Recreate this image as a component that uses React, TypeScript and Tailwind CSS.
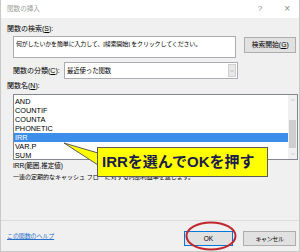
import { ChevronDown, ChevronUp } from 'lucide-react'

const font = { fontFamily: "'Liberation Sans', 'Noto Sans CJK JP', sans-serif" }

const items = ['AND', 'COUNTIF', 'COUNTA', 'PHONETIC', 'IRR', 'VAR.P', 'SUM']

export default function App() {
  return (
    <div
      className="relative w-[300px] h-[252px] overflow-hidden bg-[#f0f0f0] text-black border-x border-b border-[#c9c9c9] flex flex-col"
      style={font}
    >
      {/* title bar */}
      <div className="h-[18px] bg-white flex items-center pl-[6px] pr-[9px] shrink-0">
        <span className="text-[6.6px] leading-[8px] text-[#a0a0a0]">関数の挿入</span>
        <span className="ml-auto text-[8px] leading-[8px] text-[#888]">?</span>
        <span className="ml-[22px] text-[10px] leading-[8px] text-[#888]">×</span>
      </div>

      <div className="flex flex-col pl-[6px] pr-[3px] flex-1">
        <p className="mt-[7px] h-[8px] text-[7px] leading-[8px]">関数の検索(<span className="underline">S</span>):</p>

        <div className="mt-[3px] flex pl-[6px] gap-[8px]">
          <div className="w-[225px] h-[22px] bg-white border border-[#abadb3] pl-[2px] pt-[3px] text-[6px] leading-[8px] tracking-[-0.15px] whitespace-nowrap overflow-hidden">
            何がしたいかを簡単に入力して、[検索開始] をクリックしてください。
          </div>
          <button className="mt-[1px] w-[52px] h-[16px] bg-[#e1e1e1] border border-[#adadad] text-[6.8px] leading-[8px]">
            検索開始(<span className="underline">G</span>)
          </button>
        </div>

        <div className="mt-[4px] flex items-center pl-[6px] h-[17px]">
          <span className="w-[51px] text-[7px] leading-[8px] whitespace-nowrap">
            関数の分類(<span className="underline">C</span>):
          </span>
          <div className="w-[174px] h-[17px] bg-white border border-[#abadb3] flex items-center">
            <span className="pl-[2px] text-[6.4px] leading-[8px] tracking-[-0.1px]">最近使った関数</span>
            <div className="ml-auto mr-[1px] w-[8px] h-[13px] bg-[#e8e8e8] border border-[#cfcfcf] flex items-center justify-center">
              <ChevronDown size={6} strokeWidth={1.5} color="#777" />
            </div>
          </div>
        </div>

        <p className="mt-[3px] h-[8px] text-[7px] leading-[8px]">関数名(<span className="underline">N</span>):</p>

        <div className="mt-[4px] ml-[6px] w-[285px] h-[66px] bg-white border border-[#828790] flex">
          <div className="flex-1 pt-[2px] overflow-hidden">
            {items.map((it) => (
              <div
                key={it}
                className={`h-[9px] pl-[1px] text-[7.3px] leading-[9px] ${it === 'IRR' ? 'bg-[#3b8eea] text-white' : ''}`}
              >
                {it}
              </div>
            ))}
          </div>
          <div className="w-[9px] bg-[#f0f0f0] flex flex-col items-center">
            <ChevronUp size={6} strokeWidth={1.5} color="#888" className="mt-[2px]" />
            <div className="mt-[17px] w-[7px] h-[28px] bg-[#cdcdcd]" />
            <ChevronDown size={6} strokeWidth={1.5} color="#888" className="mt-auto mb-[2px]" />
          </div>
        </div>

        <p className="mt-[2px] ml-[6px] h-[8px] text-[6.5px] leading-[8px]">IRR(範囲,推定値)</p>
        <p className="mt-[3px] ml-[6px] h-[8px] text-[6px] leading-[8px] whitespace-nowrap">
          一連の定期的なキャッシュ フローに対する内部利益率を返します。
        </p>

        <div className="mt-[39px] -ml-[6px] -mr-[3px] h-[1px] bg-[#dcdcdc]" />

        <div className="mt-[10px] flex items-start">
          <a className="mt-[1px] h-[8px] text-[6px] leading-[8px] text-[#2a6fc9] underline tracking-[-0.1px]">
            この関数のヘルプ
          </a>
          <button className="ml-auto w-[49px] h-[15px] bg-[#e1e1e1] border border-[#0078d7] text-[6.5px] leading-[8px]">
            OK
          </button>
          <button className="ml-[10px] w-[53px] h-[15px] bg-[#e1e1e1] border border-[#adadad] text-[6px] leading-[8px] tracking-[-0.4px]">
            キャンセル
          </button>
        </div>
      </div>

      {/* callout */}
      <svg className="absolute left-[60px] top-[140px]" width="40" height="30" viewBox="0 0 40 30">
        <polygon points="37,13 3,3 37,25" fill="#ffff00" />
        <polyline points="37,13 3,3 37,25" fill="none" stroke="#5a5a5a" strokeWidth="1" />
      </svg>
      <div className="absolute left-[96px] top-[147px] w-[171px] h-[30px] bg-[#ffff00] border border-[#5a5a5a] flex items-center pl-[4px]">
        <span className="text-[15px] leading-[18px] font-bold text-[#1c1c4a] whitespace-nowrap">IRRを選んでOKを押す</span>
      </div>

      {/* red ellipse around OK */}
      <svg className="absolute left-[183px] top-[220px]" width="54" height="32" viewBox="0 0 54 32">
        <ellipse cx="27" cy="16" rx="24.5" ry="13.5" fill="none" stroke="#c0272d" strokeWidth="2" />
      </svg>
    </div>
  )
}
